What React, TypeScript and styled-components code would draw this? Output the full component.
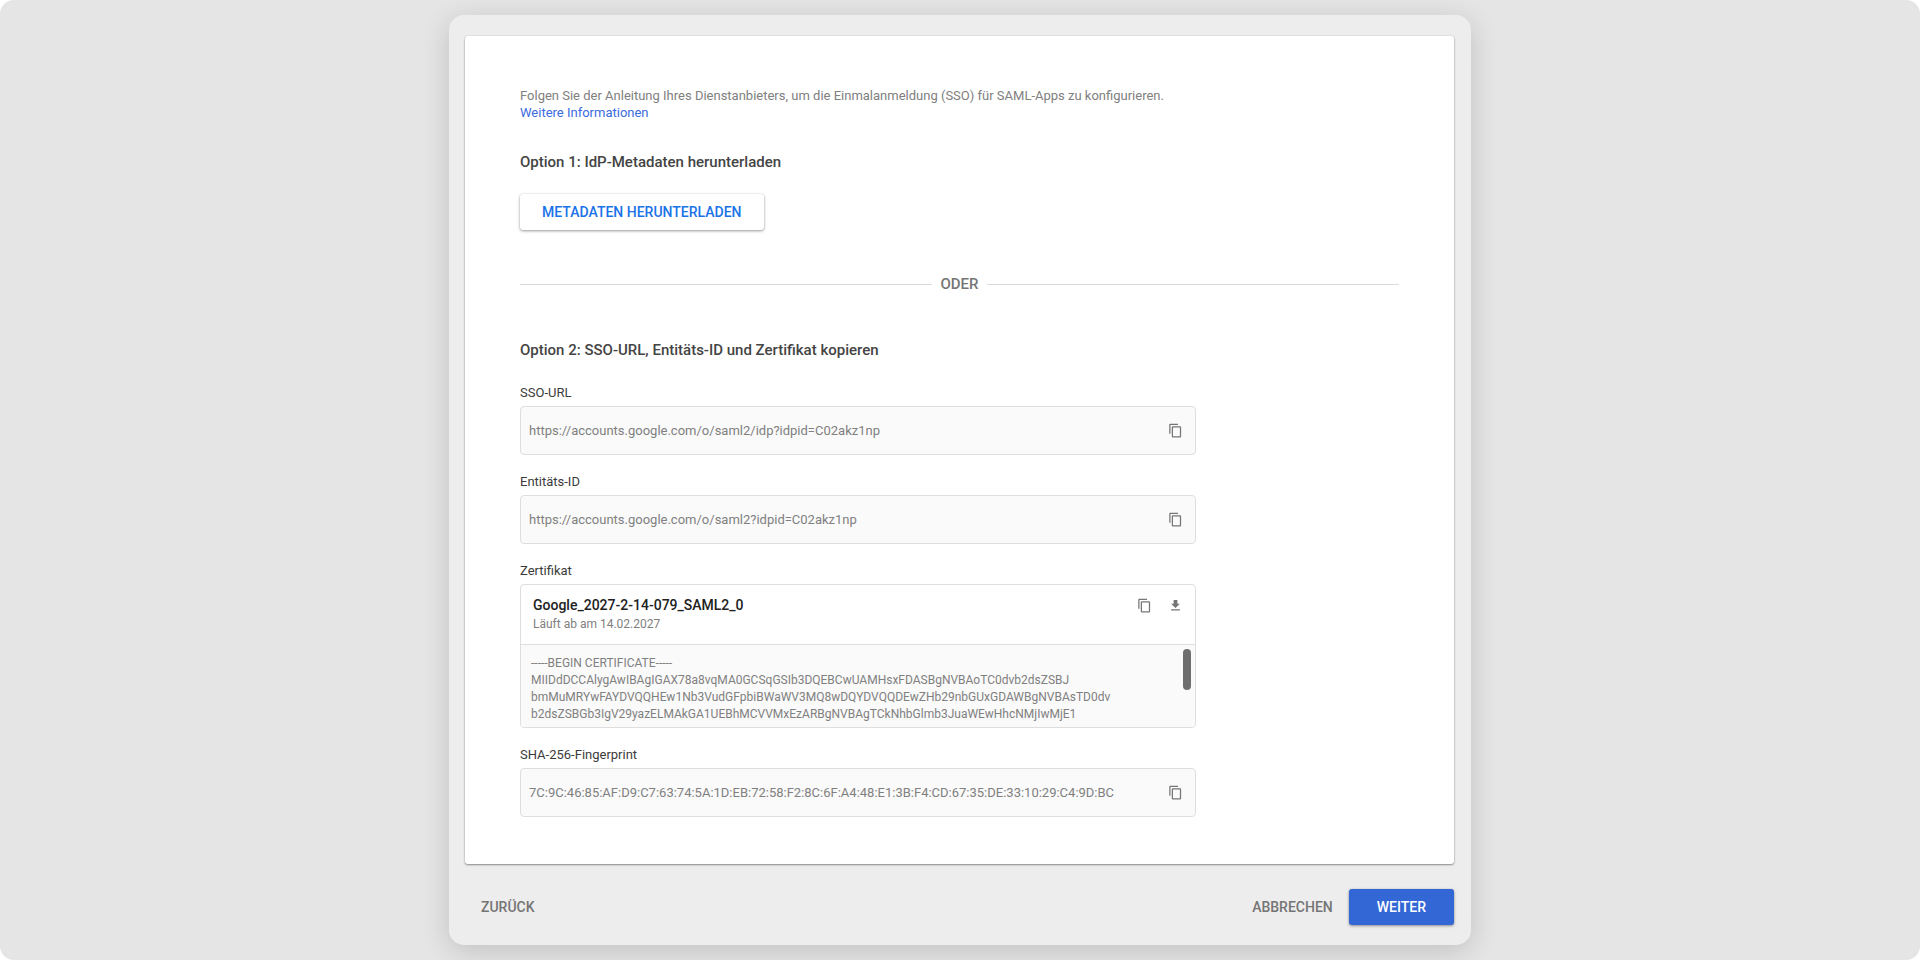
import React from "react";
import styled, { createGlobalStyle } from "styled-components";

const GlobalStyle = createGlobalStyle`
  *, *::before, *::after { box-sizing: border-box; }
  body {
    margin: 0;
    background: #ffffff;
    font-family: Roboto, "Liberation Sans", sans-serif;
    font-size: 13px;
    line-height: 17px;
    color: #3c3c3c;
  }
  h2, p, pre { margin: 0; }
  button, input { font-family: inherit; }
`;

const Page = styled.div`
  display: flex;
  justify-content: center;
  align-items: flex-start;
  min-height: 100vh;
  padding: 15px 24px 14px;
  border-radius: 14px;
  background: #e5e5e5;
`;

const Dialog = styled.main`
  width: 100%;
  max-width: 1022px;
  padding: 21px 17px 20px 16px;
  border-radius: 15px;
  background: #ededed;
  box-shadow: 0 6px 28px rgba(0, 0, 0, 0.16);
`;

const Card = styled.section`
  padding: 51px 55px 47px;
  border-radius: 3px;
  background: #ffffff;
  box-shadow: 0 1px 2px rgba(0, 0, 0, 0.4), 0 0 2px rgba(0, 0, 0, 0.12);
`;

const Intro = styled.p`
  color: #808080;
`;

const InfoLink = styled.a`
  display: table;
  color: #3a6be0;
  text-decoration: none;
`;

const Heading = styled.h2<{ $top: number }>`
  margin-top: ${(p) => p.$top}px;
  font-size: 15px;
  font-weight: 500;
  line-height: 20px;
  color: #444444;
`;

const Button = styled.button<{ $kind: "raised" | "flat" | "primary" }>`
  height: 36px;
  padding: 0 ${(p) => (p.$kind === "raised" ? 22 : p.$kind === "primary" ? 28 : 16)}px;
  border: 0;
  border-radius: 3px;
  font-size: 14px;
  font-weight: 500;
  line-height: 17px;
  cursor: pointer;
  color: ${(p) => (p.$kind === "raised" ? "#1a73e8" : p.$kind === "primary" ? "#ffffff" : "#757575")};
  background: ${(p) => (p.$kind === "raised" ? "#ffffff" : p.$kind === "primary" ? "#3367d6" : "transparent")};
  box-shadow: ${(p) =>
    p.$kind === "flat" ? "none" : "0 1px 3px rgba(0, 0, 0, 0.4), 0 0 1px rgba(0, 0, 0, 0.12)"};
`;

const DownloadRow = styled.div`
  display: flex;
  margin-top: 22px;
`;

const Divider = styled.div`
  display: flex;
  align-items: center;
  gap: 8px;
  margin-top: 44px;
  font-size: 15px;
  font-weight: 500;
  line-height: 20px;
  color: #757575;

  &::before,
  &::after {
    content: "";
    flex: 1;
    height: 1px;
    background: #dadada;
  }
`;

const Fields = styled.div`
  display: flex;
  flex-direction: column;
  gap: 18px;
  max-width: 676px;
  margin-top: 24px;
`;

const Field = styled.div`
  display: flex;
  flex-direction: column;
  gap: 5px;
`;

const Label = styled.label`
  color: #3c3c3c;
`;

const ValueBox = styled.div`
  display: flex;
  align-items: center;
  height: 49px;
  padding: 0 12px 0 8px;
  border: 1px solid #dedede;
  border-radius: 4px;
  background: #fafafa;
`;

const ValueInput = styled.input`
  flex: 1;
  min-width: 0;
  padding: 0;
  border: 0;
  outline: 0;
  background: transparent;
  font-size: 13px;
  line-height: 17px;
  color: #808080;
`;

const IconButton = styled.button`
  display: flex;
  padding: 0;
  border: 0;
  background: transparent;
  color: #757575;
  cursor: pointer;
`;

const CertificateBox = styled.div`
  overflow: hidden;
  border: 1px solid #dedede;
  border-radius: 4px;
  background: #ffffff;
`;

const CertificateHeader = styled.div`
  display: flex;
  justify-content: space-between;
  align-items: flex-start;
  height: 60px;
  padding: 11px 12px 0;
  border-bottom: 1px solid #dedede;
`;

const CertificateName = styled.p`
  font-size: 14px;
  font-weight: 500;
  line-height: 18px;
  color: #212121;
`;

const Expiry = styled.p`
  margin-top: 2px;
  font-size: 12px;
  color: #808080;
`;

const Actions = styled.div`
  display: flex;
  align-items: center;
  gap: 16px;
  height: 18px;
`;

const CertificateBody = styled.div`
  position: relative;
  height: 82px;
  padding: 10px;
  overflow: hidden;
  background: #fafafa;
`;

const CertificateText = styled.pre`
  font-family: inherit;
  font-size: 12px;
  line-height: 17px;
  color: #808080;
`;

const ScrollThumb = styled.span`
  position: absolute;
  top: 4px;
  right: 4px;
  width: 8px;
  height: 41px;
  border-radius: 4px;
  background: #6e6e6e;
`;

const Footer = styled.footer`
  display: flex;
  align-items: center;
  justify-content: space-between;
  margin-top: 25px;
`;

const CopyIcon = () => (
  <svg width="15" height="15" viewBox="0 0 24 24" fill="currentColor" aria-hidden="true">
    <path d="M16 1H4c-1.1 0-2 .9-2 2v14h2V3h12V1zm3 4H8c-1.1 0-2 .9-2 2v14c0 1.1.9 2 2 2h11c1.1 0 2-.9 2-2V7c0-1.1-.9-2-2-2zm0 16H8V7h11v14z" />
  </svg>
);

const DownloadIcon = () => (
  <svg width="15" height="15" viewBox="0 0 24 24" fill="currentColor" aria-hidden="true">
    <path d="M19 9h-4V3H9v6H5l7 7 7-7zM5 18v2h14v-2H5z" />
  </svg>
);

const certificateLines = [
  "-----BEGIN CERTIFICATE-----",
  "MIIDdDCCAlygAwIBAgIGAX78a8vqMA0GCSqGSIb3DQEBCwUAMHsxFDASBgNVBAoTC0dvb2dsZSBJ",
  "bmMuMRYwFAYDVQQHEw1Nb3VudGFpbiBWaWV3MQ8wDQYDVQQDEwZHb29nbGUxGDAWBgNVBAsTD0dv",
  "b2dsZSBGb3IgV29yazELMAkGA1UEBhMCVVMxEzARBgNVBAgTCkNhbGlmb3JuaWEwHhcNMjIwMjE1",
];

type CopyFieldProps = { id: string; label: string; value: string };

const CopyField = ({ id, label, value }: CopyFieldProps) => (
  <Field>
    <Label htmlFor={id}>{label}</Label>
    <ValueBox>
      <ValueInput id={id} type="text" value={value} readOnly />
      <IconButton type="button" aria-label={`${label} kopieren`}>
        <CopyIcon />
      </IconButton>
    </ValueBox>
  </Field>
);

export default function App() {
  return (
    <>
      <GlobalStyle />
      <Page>
        <Dialog>
          <Card>
            <Intro>
              Folgen Sie der Anleitung Ihres Dienstanbieters, um die Einmalanmeldung (SSO) für SAML-Apps zu
              konfigurieren. <InfoLink href="#info">Weitere Informationen</InfoLink>
            </Intro>
            <Heading $top={31}>Option 1: IdP-Metadaten herunterladen</Heading>
            <DownloadRow>
              <Button type="button" $kind="raised">METADATEN HERUNTERLADEN</Button>
            </DownloadRow>
            <Divider>ODER</Divider>
            <Heading $top={46}>Option 2: SSO-URL, Entitäts-ID und Zertifikat kopieren</Heading>
            <Fields>
              <CopyField id="sso-url" label="SSO-URL" value="https://accounts.google.com/o/saml2/idp?idpid=C02akz1np" />
              <CopyField id="entity-id" label="Entitäts-ID" value="https://accounts.google.com/o/saml2?idpid=C02akz1np" />
              <Field>
                <Label as="span" id="certificate-label">Zertifikat</Label>
                <CertificateBox role="group" aria-labelledby="certificate-label">
                  <CertificateHeader>
                    <div>
                      <CertificateName>Google_2027-2-14-079_SAML2_0</CertificateName>
                      <Expiry>Läuft ab am 14.02.2027</Expiry>
                    </div>
                    <Actions>
                      <IconButton type="button" aria-label="Zertifikat kopieren">
                        <CopyIcon />
                      </IconButton>
                      <IconButton type="button" aria-label="Zertifikat herunterladen">
                        <DownloadIcon />
                      </IconButton>
                    </Actions>
                  </CertificateHeader>
                  <CertificateBody>
                    <CertificateText>{certificateLines.join("\n")}</CertificateText>
                    <ScrollThumb />
                  </CertificateBody>
                </CertificateBox>
              </Field>
              <CopyField
                id="fingerprint"
                label="SHA-256-Fingerprint"
                value="7C:9C:46:85:AF:D9:C7:63:74:5A:1D:EB:72:58:F2:8C:6F:A4:48:E1:3B:F4:CD:67:35:DE:33:10:29:C4:9D:BC"
              />
            </Fields>
          </Card>
          <Footer>
            <Button type="button" $kind="flat">ZURÜCK</Button>
            <div>
              <Button type="button" $kind="flat">ABBRECHEN</Button>
              <Button type="button" $kind="primary">WEITER</Button>
            </div>
          </Footer>
        </Dialog>
      </Page>
    </>
  );
}
